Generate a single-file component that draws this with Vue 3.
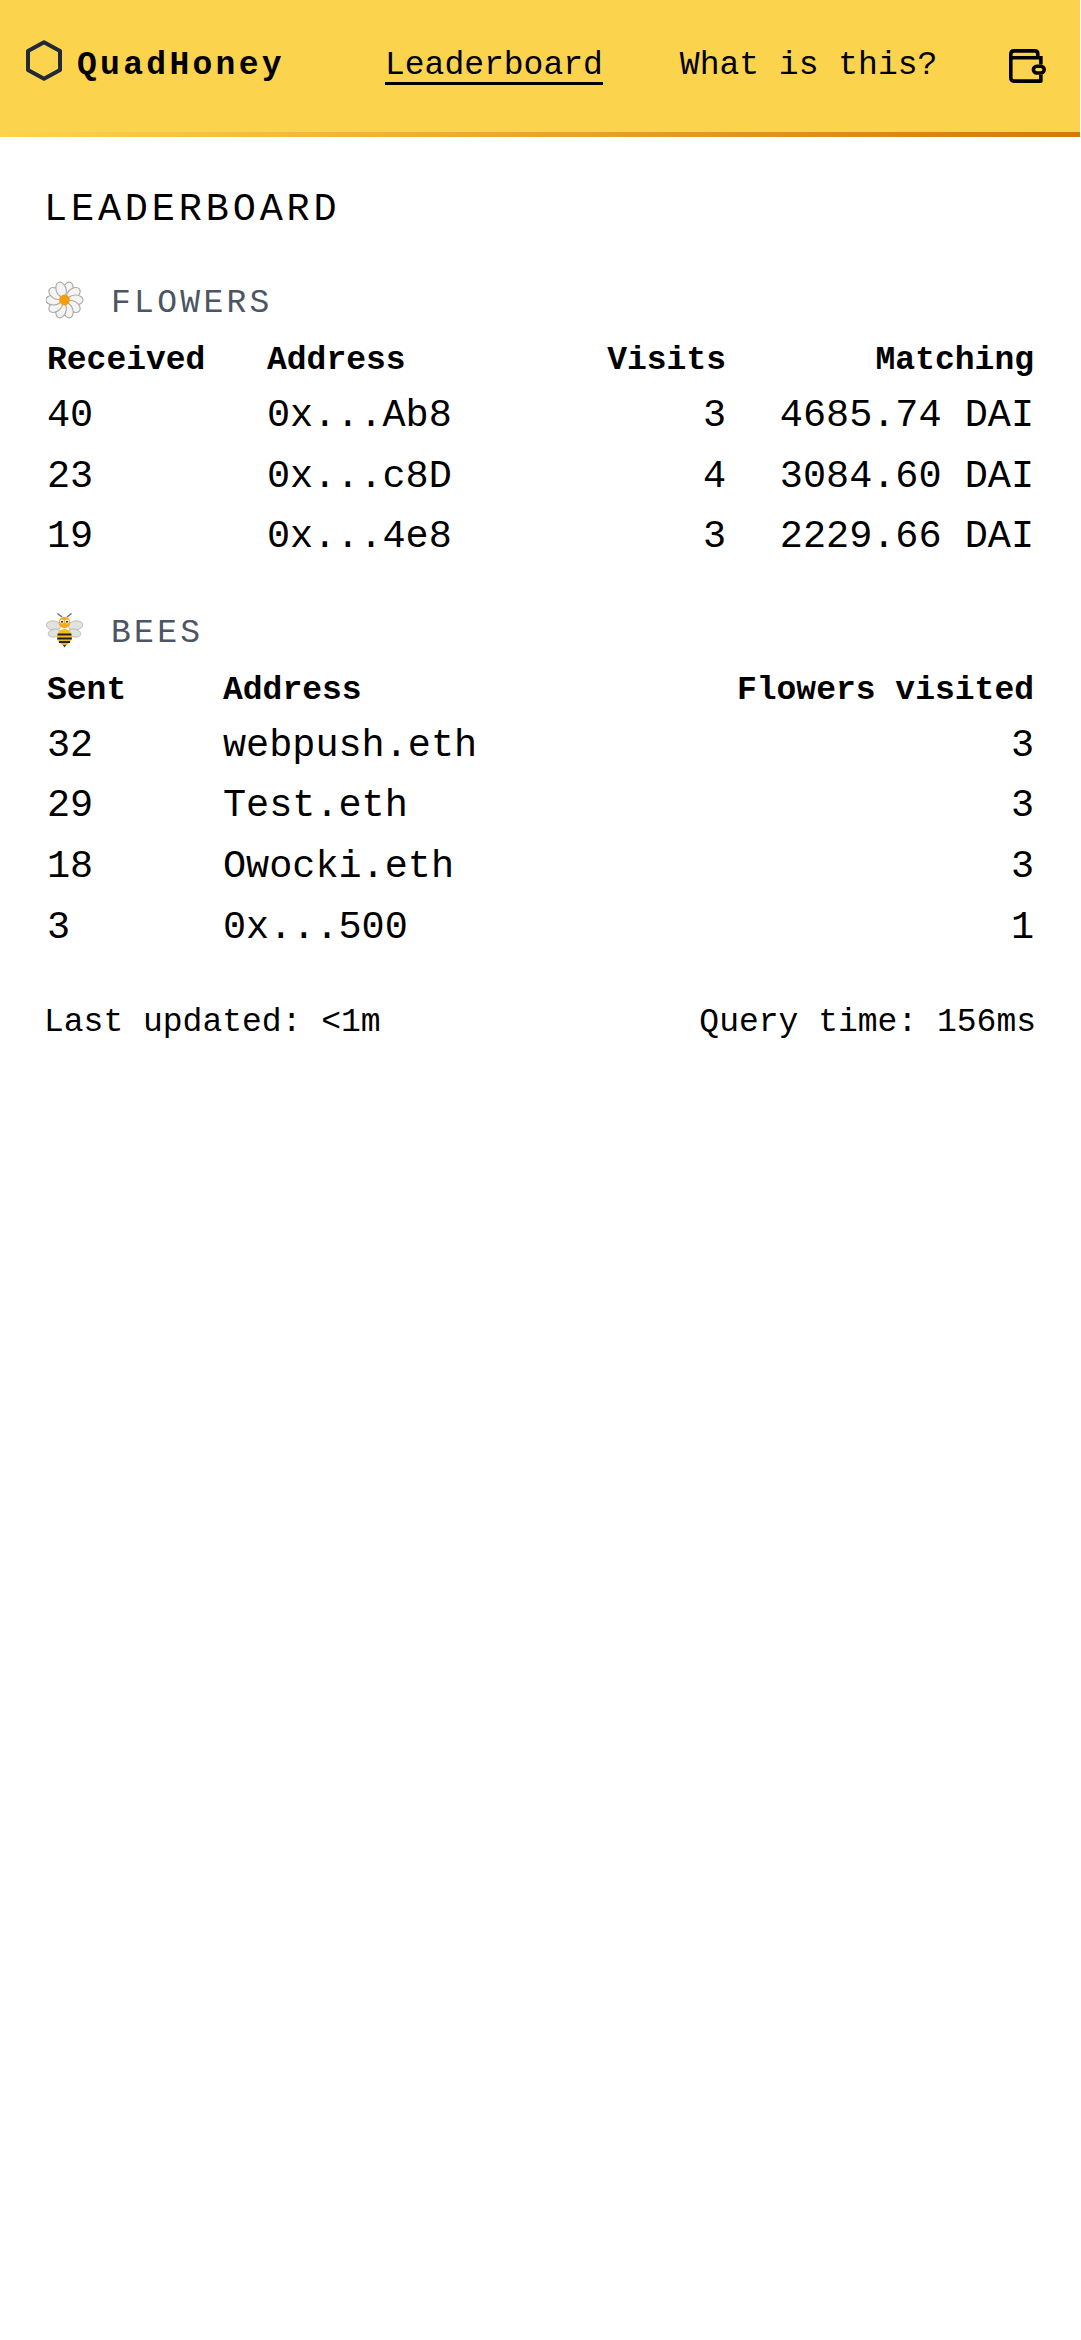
<template>
  <div class="page">
    <header class="nav">
      <div class="brand">
        <svg class="hex" width="36" height="41" viewBox="0 0 36 41" fill="none">
          <path
            d="M18 2.2 L34 11 V30 L18 38.8 L2 30 V11 Z"
            stroke="#1f2937"
            stroke-width="4"
            stroke-linejoin="round"
          />
        </svg>
        <span class="brand-name">QuadHoney</span>
      </div>
      <nav class="links">
        <a class="link active">Leaderboard</a>
        <a class="link">What is this?</a>
      </nav>
      <svg class="wallet" width="37" height="34" viewBox="0 0 36 33" fill="none" stroke="#000" stroke-width="3.5">
        <path d="M28 8.5 V4.5 Q28 1.75 25 1.75 H5 Q1.75 1.75 1.75 5 V28 Q1.75 31.25 5 31.25 H31 V25" stroke-linejoin="round" />
        <path d="M1.75 8.5 H31 V15" />
        <rect x="23.75" y="16.75" width="10.5" height="6.5" rx="3.25" />
      </svg>
    </header>

    <main class="content">
      <h1 class="title">LEADERBOARD</h1>

      <section class="block">
        <h2 class="section-head">
          <svg class="emoji flower" width="38" height="38" viewBox="0 0 38 38">
            <g fill="#f4f4f2" stroke="#a9a9a4" stroke-width="1.1">
              <ellipse v-for="a in petals" :key="a" cx="18.5" cy="8" rx="5" ry="7.6" :transform="`rotate(${a} 18.5 19)`" />
            </g>
            <circle cx="18.5" cy="19" r="5.4" fill="#f59e0b" />
          </svg>
          <span>FLOWERS</span>
        </h2>
        <table class="board">
          <colgroup>
            <col class="f-1" />
            <col />
            <col />
            <col class="f-4" />
          </colgroup>
          <thead>
            <tr>
              <th>Received</th>
              <th>Address</th>
              <th class="num">Visits</th>
              <th class="num">Matching</th>
            </tr>
          </thead>
          <tbody>
            <tr v-for="row in flowers" :key="row.address">
              <td>{{ row.received }}</td>
              <td>{{ row.address }}</td>
              <td class="num">{{ row.visits }}</td>
              <td class="num">{{ row.matching }}</td>
            </tr>
          </tbody>
        </table>
      </section>

      <section class="block">
        <h2 class="section-head">
          <svg class="emoji" width="38" height="38" viewBox="0 0 38 38">
            <path d="M16 5 L11.5 1.5 M21 5 L25.5 1.5" stroke="#666" stroke-width="1.3" fill="none" />
            <g fill="#e2e2de" stroke="#b5b5b0" stroke-width="0.8">
              <ellipse cx="7.5" cy="13.5" rx="7.2" ry="4.6" transform="rotate(8 7.5 13.5)" />
              <ellipse cx="29.5" cy="13.5" rx="7.2" ry="4.6" transform="rotate(-8 29.5 13.5)" />
              <ellipse cx="8.5" cy="21" rx="6.4" ry="3.9" transform="rotate(-14 8.5 21)" />
              <ellipse cx="28.5" cy="21" rx="6.4" ry="3.9" transform="rotate(14 28.5 21)" />
            </g>
            <path d="M18.5 35.5 L15.5 31 H21.5 Z" fill="#333" />
            <ellipse cx="18.5" cy="25" rx="7.4" ry="8" fill="#f5bd25" />
            <path d="M11.6 21.6 H25.4 V23.6 H11.6 Z M11.2 25.4 H25.8 V27.4 H11.2 Z M13 29 H24 V31 H13 Z" fill="#222" />
            <circle cx="18.5" cy="10.5" r="5.8" fill="#f6a821" />
            <circle cx="16" cy="9.5" r="2" fill="#fff" />
            <circle cx="21" cy="9.5" r="2" fill="#fff" />
            <circle cx="16" cy="9.8" r="1" fill="#222" />
            <circle cx="21" cy="9.8" r="1" fill="#222" />
          </svg>
          <span>BEES</span>
        </h2>
        <table class="board">
          <colgroup>
            <col class="b-1" />
            <col />
            <col />
          </colgroup>
          <thead>
            <tr>
              <th>Sent</th>
              <th>Address</th>
              <th class="num">Flowers visited</th>
            </tr>
          </thead>
          <tbody>
            <tr v-for="row in bees" :key="row.address">
              <td>{{ row.sent }}</td>
              <td>{{ row.address }}</td>
              <td class="num">{{ row.visited }}</td>
            </tr>
          </tbody>
        </table>
      </section>

      <footer class="stats">
        <span>Last updated: &lt;1m</span>
        <span>Query time: 156ms</span>
      </footer>
    </main>
  </div>
</template>

<script setup>
const petals = [0, 36, 72, 108, 144, 180, 216, 252, 288, 324].map((a) => a + 18);

const flowers = [
  { received: 40, address: "0x...Ab8", visits: 3, matching: "4685.74 DAI" },
  { received: 23, address: "0x...c8D", visits: 4, matching: "3084.60 DAI" },
  { received: 19, address: "0x...4e8", visits: 3, matching: "2229.66 DAI" },
];

const bees = [
  { sent: 32, address: "webpush.eth", visited: 3 },
  { sent: 29, address: "Test.eth", visited: 3 },
  { sent: 18, address: "Owocki.eth", visited: 3 },
  { sent: 3, address: "0x...500", visited: 1 },
];
</script>

<style>
html,
body {
  margin: 0;
  background: #fff;
}
</style>

<style scoped>
.page {
  width: 1080px;
  font-family: "Liberation Mono", monospace;
  color: #000;
}
.nav {
  box-sizing: border-box;
  height: 137px;
  background: #fcd34d;
  position: relative;
  display: flex;
  align-items: center;
  padding: 0 34px 6px 26px;
}
.nav::after {
  content: "";
  position: absolute;
  left: 0;
  right: 0;
  bottom: 0;
  height: 5px;
  background: linear-gradient(90deg, #fcd34d, #d97706);
}
.brand {
  display: flex;
  align-items: center;
  gap: 15px;
  width: 359px;
}
.hex {
  flex: none;
  margin-top: -10px;
}
.brand-name {
  font-size: 33px;
  font-weight: 700;
  letter-spacing: 3.3px;
}
.links {
  display: flex;
  gap: 77px;
  flex: 1;
}
.link {
  font-size: 33px;
  line-height: 33px;
  padding-top: 3px;
  border-bottom: 3px solid transparent;
}
.link.active {
  border-bottom-color: #000;
}
.wallet {
  flex: none;
}
.content {
  padding: 48px 44px 0;
}
.title {
  margin: 0;
  font-size: 38.5px;
  font-weight: 400;
  line-height: 50px;
  letter-spacing: 0.1em;
}
.block {
  margin-top: 48px;
}
.block + .block {
  margin-top: 45px;
}
.section-head {
  margin: 0;
  display: flex;
  align-items: center;
  gap: 27px;
  font-size: 33px;
  font-weight: 400;
  line-height: 42px;
  letter-spacing: 0.1em;
  color: #4b5563;
}
.emoji {
  flex: none;
  margin: -5px 0 0 2px;
}
.flower {
  margin-top: -8px;
}
.board {
  width: calc(100% - 4px);
  margin: 11px 2px 0;
  border-collapse: collapse;
  table-layout: fixed;
}
th,
td {
  padding: 0 0 0 1px;
  text-align: left;
}
th {
  font-size: 33px;
  font-weight: 700;
  line-height: 50px;
}
td {
  font-size: 38.5px;
  line-height: 60.6px;
}
.num {
  text-align: right;
}
.f-1 {
  width: 220px;
}
.f-4 {
  width: 308px;
}
.b-1 {
  width: 176px;
}
.stats {
  display: flex;
  justify-content: space-between;
  margin-top: 43px;
  font-size: 33px;
  line-height: 44px;
}
</style>
